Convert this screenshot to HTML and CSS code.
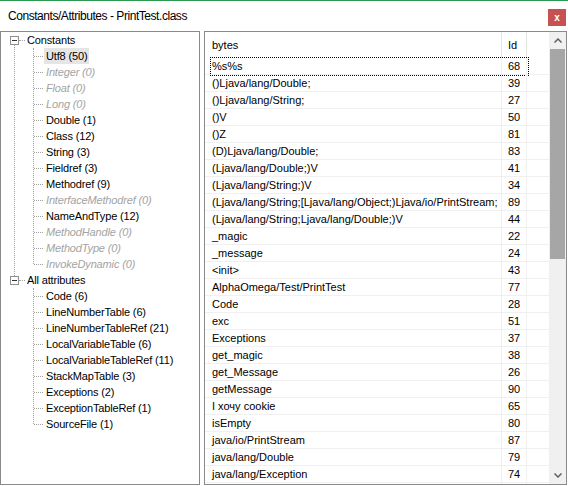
FILE: index.html
```html
<!DOCTYPE html>
<html>
<head>
<meta charset="utf-8">
<link rel="stylesheet" href="styles.css">
</head>
<body>
<div class="window">
  <div class="titlebar">
    <div class="title">Constants/Attributes - PrintTest.class</div>
    <div class="close">x</div>
  </div>
  <div class="main">
    <div class="left">
      <div class="tree">
        <div class="node first">
          <div class="row root"><span class="box"></span><span class="hconn"></span><span class="label">Constants</span></div>
          <div class="children">
            <div class="leaf"><span class="label sel">Utf8 (50)</span></div>
            <div class="leaf"><span class="label dim">Integer (0)</span></div>
            <div class="leaf"><span class="label dim">Float (0)</span></div>
            <div class="leaf"><span class="label dim">Long (0)</span></div>
            <div class="leaf"><span class="label">Double (1)</span></div>
            <div class="leaf"><span class="label">Class (12)</span></div>
            <div class="leaf"><span class="label">String (3)</span></div>
            <div class="leaf"><span class="label">Fieldref (3)</span></div>
            <div class="leaf"><span class="label">Methodref (9)</span></div>
            <div class="leaf"><span class="label dim">InterfaceMethodref (0)</span></div>
            <div class="leaf"><span class="label">NameAndType (12)</span></div>
            <div class="leaf"><span class="label dim">MethodHandle (0)</span></div>
            <div class="leaf"><span class="label dim">MethodType (0)</span></div>
            <div class="leaf"><span class="label dim">InvokeDynamic (0)</span></div>
          </div>
        </div>
        <div class="node">
          <div class="row root"><span class="box"></span><span class="hconn"></span><span class="label">All attributes</span></div>
          <div class="children">
            <div class="leaf"><span class="label">Code (6)</span></div>
            <div class="leaf"><span class="label">LineNumberTable (6)</span></div>
            <div class="leaf"><span class="label">LineNumberTableRef (21)</span></div>
            <div class="leaf"><span class="label">LocalVariableTable (6)</span></div>
            <div class="leaf"><span class="label">LocalVariableTableRef (11)</span></div>
            <div class="leaf"><span class="label">StackMapTable (3)</span></div>
            <div class="leaf"><span class="label">Exceptions (2)</span></div>
            <div class="leaf"><span class="label">ExceptionTableRef (1)</span></div>
            <div class="leaf"><span class="label">SourceFile (1)</span></div>
          </div>
        </div>
      </div>
    </div>
    <div class="right">
      <div class="list">
        <div class="hdr">
          <div class="c1">bytes</div>
          <div class="c2">Id</div>
        </div>
        <div class="r focus"><div class="c1">%s%s</div><div class="c2">68</div></div>
        <div class="r"><div class="c1">()Ljava/lang/Double;</div><div class="c2">39</div></div>
        <div class="r"><div class="c1">()Ljava/lang/String;</div><div class="c2">27</div></div>
        <div class="r"><div class="c1">()V</div><div class="c2">50</div></div>
        <div class="r"><div class="c1">()Z</div><div class="c2">81</div></div>
        <div class="r"><div class="c1">(D)Ljava/lang/Double;</div><div class="c2">83</div></div>
        <div class="r"><div class="c1">(Ljava/lang/Double;)V</div><div class="c2">41</div></div>
        <div class="r"><div class="c1">(Ljava/lang/String;)V</div><div class="c2">34</div></div>
        <div class="r"><div class="c1">(Ljava/lang/String;[Ljava/lang/Object;)Ljava/io/PrintStream;</div><div class="c2">89</div></div>
        <div class="r"><div class="c1">(Ljava/lang/String;Ljava/lang/Double;)V</div><div class="c2">44</div></div>
        <div class="r"><div class="c1">_magic</div><div class="c2">22</div></div>
        <div class="r"><div class="c1">_message</div><div class="c2">24</div></div>
        <div class="r"><div class="c1">&lt;init&gt;</div><div class="c2">43</div></div>
        <div class="r"><div class="c1">AlphaOmega/Test/PrintTest</div><div class="c2">77</div></div>
        <div class="r"><div class="c1">Code</div><div class="c2">28</div></div>
        <div class="r"><div class="c1">exc</div><div class="c2">51</div></div>
        <div class="r"><div class="c1">Exceptions</div><div class="c2">37</div></div>
        <div class="r"><div class="c1">get_magic</div><div class="c2">38</div></div>
        <div class="r"><div class="c1">get_Message</div><div class="c2">26</div></div>
        <div class="r"><div class="c1">getMessage</div><div class="c2">90</div></div>
        <div class="r"><div class="c1">I хочу cookie</div><div class="c2">65</div></div>
        <div class="r"><div class="c1">isEmpty</div><div class="c2">80</div></div>
        <div class="r"><div class="c1">java/io/PrintStream</div><div class="c2">87</div></div>
        <div class="r"><div class="c1">java/lang/Double</div><div class="c2">79</div></div>
        <div class="r"><div class="c1">java/lang/Exception</div><div class="c2">74</div></div>
        <div class="r"><div class="c1"></div><div class="c2"></div></div>
      </div>
      <div class="sb">
        <div class="arrow"><svg width="8" height="5" viewBox="0 0 8 5"><polyline points="0.5,4.5 4,1 7.5,4.5" fill="none" stroke="#606060" stroke-width="1.5"/></svg></div>
        <div class="thumb"></div>
        <div class="track"></div>
        <div class="arrow"><svg width="8" height="5" viewBox="0 0 8 5"><polyline points="0.5,0.5 4,4 7.5,0.5" fill="none" stroke="#606060" stroke-width="1.5"/></svg></div>
      </div>
    </div>
  </div>
</div>
</body>
</html>
```
FILE: styles.css
```css
* { box-sizing: border-box; }
body {
  margin: 0;
  width: 568px;
  height: 486px;
  background: #fff;
  font-family: "Liberation Sans", Arial, sans-serif;
  font-size: 11px;
  color: #000;
  overflow: hidden;
}
.window {
  display: flex;
  flex-direction: column;
  height: 486px;
  border-top: 1px solid #2b9a4f;
}
.titlebar {
  height: 30px;
  display: flex;
  align-items: center;
  justify-content: space-between;
  padding: 0 2px 0 8px;
}
.title {
  font-size: 12px;
  letter-spacing: -0.45px;
  margin-top: -1px;
}
.close {
  align-self: flex-start;
  margin-top: 8px;
  width: 18px;
  height: 17px;
  background: #c75050;
  color: #fff;
  display: flex;
  align-items: center;
  justify-content: center;
  font-weight: bold;
  font-size: 10px;
  line-height: 1;
}
.main {
  flex: 1;
  display: flex;
  gap: 4px;
  padding: 0 1px 1px 0;
  min-height: 0;
}
.left {
  width: 200px;
  border: 1px solid #8a8a8a;
  overflow: hidden;
}
.right {
  flex: 1;
  border: 1px solid #8a8a8a;
  display: flex;
  overflow: hidden;
}

/* tree */
.tree { position: relative; }
.row, .leaf {
  height: 16px;
  line-height: 16px;
  display: flex;
  align-items: center;
  white-space: nowrap;
}
.leaf .label, .root .label { letter-spacing: -0.15px; }
.root { padding-left: 9px; }
.box {
  width: 9px;
  height: 9px;
  border: 1px solid #919191;
  position: relative;
  background: #fff;
}
.box::after {
  content: "";
  position: absolute;
  left: 1px;
  top: 3px;
  width: 5px;
  height: 1px;
  background: #333;
}
.hconn {
  width: 6px;
  height: 0;
  border-top: 1px dotted #a0a0a0;
}
.label { padding: 0 2px; }
.sel { background: #e5e5e5; }
.dim { color: #a3a3a3; font-style: italic; }
.node.first { position: relative; }
.node.first::before {
  content: "";
  position: absolute;
  left: 13px;
  top: 13px;
  height: 231px;
  border-left: 1px dotted #a0a0a0;
}
.children {
  position: relative;
  padding-left: 43px;
}
.children::before {
  content: "";
  position: absolute;
  left: 32px;
  top: 0;
  bottom: 8px;
  border-left: 1px dotted #a0a0a0;
}
.leaf { position: relative; }
.leaf::before {
  content: "";
  position: absolute;
  left: -10px;
  top: 8px;
  width: 9px;
  border-top: 1px dotted #a0a0a0;
}

/* list */
.list {
  flex: 1;
  display: flex;
  flex-direction: column;
  overflow: hidden;
}
.hdr {
  height: 26px;
  flex: none;
  display: flex;
}
.hdr .c1, .hdr .c2 {
  display: flex;
  align-items: center;
  border-right: 1px solid #e5e5e5;
}
.c1 { width: 297px; padding-left: 7px; white-space: nowrap; overflow: hidden; }
.c2 { width: 25px; padding-left: 6px; }
.r {
  height: 17px;
  flex: none;
  display: flex;
  border-bottom: 1px solid #f0f0f0;
  line-height: 16px;
  position: relative;
}
.r .c1, .r .c2 { border-right: 1px solid #f0f0f0; }
.focus::after {
  content: "";
  position: absolute;
  left: 5px;
  top: -1px;
  width: 317px;
  height: 17px;
  border: 1px dotted #000;
}
.sb {
  width: 17px;
  flex: none;
  background: #f0f0f0;
  display: flex;
  flex-direction: column;
}
.arrow {
  height: 17px;
  flex: none;
  display: flex;
  align-items: center;
  justify-content: center;
}
.thumb {
  height: 210px;
  flex: none;
  margin: 0 1px;
  background: #a6a6a6;
}
.track { flex: 1; }
```
